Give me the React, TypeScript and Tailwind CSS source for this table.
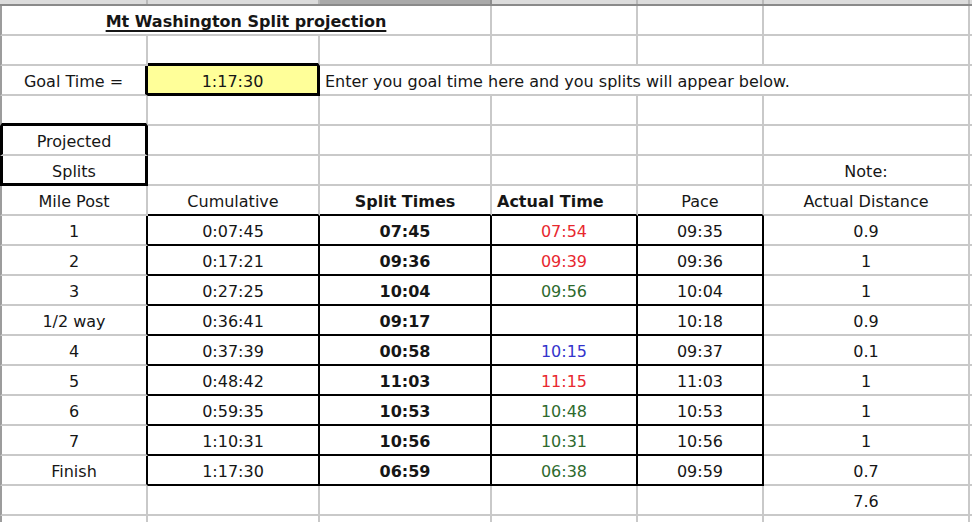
import React from 'react';
import { twMerge } from 'tailwind-merge';

// cell widths include their own right border (and the left border on col A)
const COLS = [148, 172, 172, 146, 126, 206];

const base =
  'flex items-center justify-center whitespace-nowrap overflow-visible pt-[4px] border-r-2 border-b-2 border-r-[#c9c9c9] border-b-[#c9c9c9] text-[#161616]';

const Cell: React.FC<{ className?: string; children?: React.ReactNode }> = ({
  className,
  children,
}) => <div className={twMerge(base, className)}>{children}</div>;

// col A always carries the sheet's left edge line
const colA = 'border-l-2 border-l-[#9c9c9c]';
// last sliver of column G
const colG = 'border-r-0';

const RED = 'text-[#e8282f]';
const GREEN = 'text-[#2e6a2e]';
const BLUE = 'text-[#3434cc]';

const splits = [
  { post: '1', cum: '0:07:45', split: '07:45', actual: '07:54', color: RED, pace: '09:35', dist: '0.9' },
  { post: '2', cum: '0:17:21', split: '09:36', actual: '09:39', color: RED, pace: '09:36', dist: '1' },
  { post: '3', cum: '0:27:25', split: '10:04', actual: '09:56', color: GREEN, pace: '10:04', dist: '1' },
  { post: '1/2 way', cum: '0:36:41', split: '09:17', actual: '', color: '', pace: '10:18', dist: '0.9' },
  { post: '4', cum: '0:37:39', split: '00:58', actual: '10:15', color: BLUE, pace: '09:37', dist: '0.1' },
  { post: '5', cum: '0:48:42', split: '11:03', actual: '11:15', color: RED, pace: '11:03', dist: '1' },
  { post: '6', cum: '0:59:35', split: '10:53', actual: '10:48', color: GREEN, pace: '10:53', dist: '1' },
  { post: '7', cum: '1:10:31', split: '10:56', actual: '10:31', color: GREEN, pace: '10:56', dist: '1' },
  { post: 'Finish', cum: '1:17:30', split: '06:59', actual: '06:38', color: GREEN, pace: '09:59', dist: '0.7' },
];

const tbl = 'border-r-black border-b-black';

const BlankRow: React.FC<{ a?: string }> = ({ a }) => (
  <>
    <Cell className={twMerge(colA, a)} />
    <Cell />
    <Cell />
    <Cell />
    <Cell />
    <Cell />
    <Cell className={colG} />
  </>
);

export default function App() {
  return (
    <div
      className="h-[522px] w-[972px] overflow-hidden bg-white text-[16px]"
      style={{ fontFamily: '"DejaVu Sans", "Liberation Sans", sans-serif' }}
    >
      {/* column header strip */}
      <div className="flex h-[6px] border-b-2 border-[#8a8a8a]">
        {COLS.map((w, i) => (
          <div
            key={i}
            style={{ width: w }}
            className={
              i === 2
                ? 'h-full border-r-2 border-[#8f8f8f] bg-[#a9a9a9]'
                : 'h-full border-r-2 border-[#b9b9b9] bg-[#dcdcdc]'
            }
          />
        ))}
        <div className="h-full flex-1 bg-[#dcdcdc]" />
      </div>

      <div className="grid grid-cols-[148px_172px_172px_146px_126px_206px_1fr] auto-rows-[30px]">
        {/* 1: title */}
        <Cell className={twMerge(colA, 'col-span-3 font-bold underline decoration-2 underline-offset-[3px]')}>
          Mt Washington Split projection
        </Cell>
        <Cell />
        <Cell />
        <Cell />
        <Cell className={colG} />

        {/* 2 */}
        <Cell className={colA} />
        <Cell className="border-b-[3px] border-b-black" />
        <Cell />
        <Cell />
        <Cell />
        <Cell />
        <Cell className={colG} />

        {/* 3: goal time */}
        <Cell className={twMerge(colA, 'border-r-[3px] border-r-black')}>Goal Time =</Cell>
        <Cell className="border-r-[3px] border-b-[3px] border-r-black border-b-black bg-[#ffff99]">
          1:17:30
        </Cell>
        <Cell className="col-span-4 justify-start pl-[5px]">
          Enter you goal time here and you splits will appear below.
        </Cell>
        <Cell className={colG} />

        {/* 4 */}
        <BlankRow a="border-b-[3px] border-b-black" />

        {/* 5-6: projected splits box */}
        <Cell className="border-l-[3px] border-r-[3px] border-l-black border-r-black">Projected</Cell>
        <Cell />
        <Cell />
        <Cell />
        <Cell />
        <Cell />
        <Cell className={colG} />

        <Cell className="border-l-[3px] border-r-[3px] border-b-[3px] border-l-black border-r-black border-b-black">
          Splits
        </Cell>
        <Cell />
        <Cell />
        <Cell />
        <Cell />
        <Cell>Note:</Cell>
        <Cell className={colG} />

        {/* 7: headings */}
        <Cell className={colA}>Mile Post</Cell>
        <Cell className="border-b-black">Cumulative</Cell>
        <Cell className="border-b-black font-bold">Split Times</Cell>
        <Cell className="justify-start border-b-black pl-[5px] font-bold">Actual Time</Cell>
        <Cell className="border-b-black">Pace</Cell>
        <Cell>Actual Distance</Cell>
        <Cell className={colG} />

        {/* 8-16: splits */}
        {splits.map((s) => (
          <React.Fragment key={s.post}>
            <Cell className={twMerge(colA, 'border-r-black')}>{s.post}</Cell>
            <Cell className={tbl}>{s.cum}</Cell>
            <Cell className={twMerge(tbl, 'font-bold')}>{s.split}</Cell>
            <Cell className={twMerge(tbl, s.color)}>{s.actual}</Cell>
            <Cell className={tbl}>{s.pace}</Cell>
            <Cell>{s.dist}</Cell>
            <Cell className={colG} />
          </React.Fragment>
        ))}

        {/* 17: total */}
        <Cell className={colA} />
        <Cell />
        <Cell />
        <Cell />
        <Cell />
        <Cell>7.6</Cell>
        <Cell className={colG} />

        <BlankRow />
      </div>
    </div>
  );
}
